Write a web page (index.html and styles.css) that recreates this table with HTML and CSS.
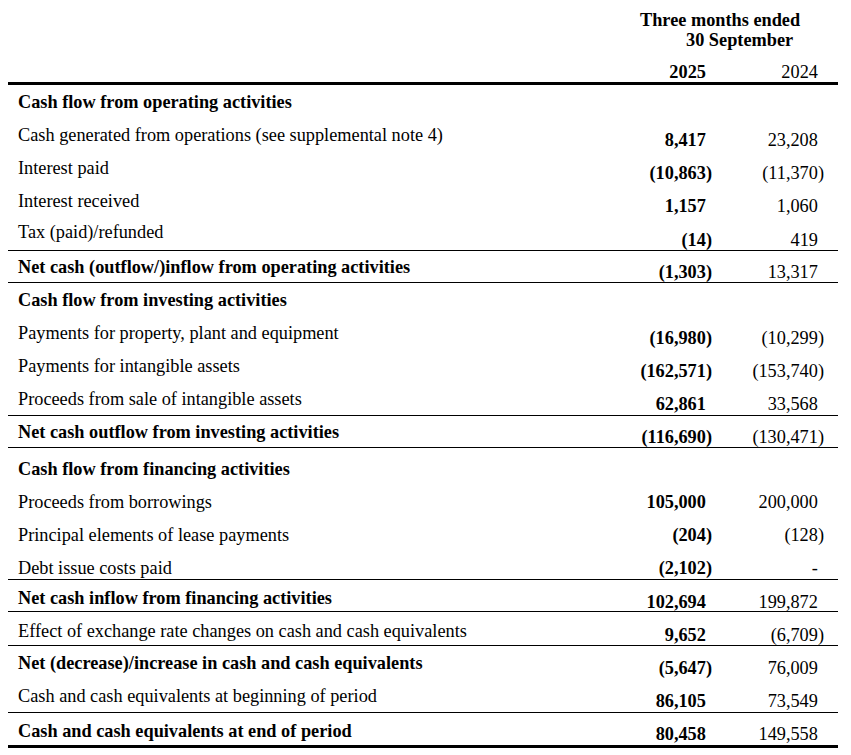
FILE: index.html
```html
<!DOCTYPE html>
<html lang="en">
<head>
<meta charset="utf-8">
<title>Cash flow statement</title>
<link rel="stylesheet" href="styles.css">
</head>
<body>
<div class="sheet">
  <div class="grid head">
    <div class="title b">
      <div class="t1">Three months ended</div>
      <div class="t2">30 September</div>
    </div>
  </div>
  <div class="grid years">
    <div></div>
    <div class="num b">2025</div>
    <div class="num">2024</div>
  </div>

  <div class="grid row"><div class="lbl b">Cash flow from operating activities</div><div></div><div></div></div>
  <div class="grid row"><div class="lbl">Cash generated from operations (see supplemental note 4)</div><div class="num b">8,417</div><div class="num">23,208</div></div>
  <div class="grid row"><div class="lbl">Interest paid</div><div class="num b">(10,863<span class="cp">)</span></div><div class="num">(11,370<span class="cp">)</span></div></div>
  <div class="grid row"><div class="lbl">Interest received</div><div class="num b">1,157</div><div class="num">1,060</div></div>
  <div class="grid row tax"><div class="lbl">Tax (paid)/refunded</div><div class="num b">(14<span class="cp">)</span></div><div class="num">419</div></div>
  <div class="grid row tot"><div class="lbl b">Net cash (outflow/)inflow from operating activities</div><div class="num b">(1,303<span class="cp">)</span></div><div class="num">13,317</div></div>

  <div class="grid row"><div class="lbl b">Cash flow from investing activities</div><div></div><div></div></div>
  <div class="grid row"><div class="lbl">Payments for property, plant and equipment</div><div class="num b">(16,980<span class="cp">)</span></div><div class="num">(10,299<span class="cp">)</span></div></div>
  <div class="grid row"><div class="lbl">Payments for intangible assets</div><div class="num b">(162,571<span class="cp">)</span></div><div class="num">(153,740<span class="cp">)</span></div></div>
  <div class="grid row"><div class="lbl">Proceeds from sale of intangible assets</div><div class="num b">62,861</div><div class="num">33,568</div></div>
  <div class="grid row tot"><div class="lbl b">Net cash outflow from investing activities</div><div class="num b">(116,690<span class="cp">)</span></div><div class="num">(130,471<span class="cp">)</span></div></div>

  <div class="grid row fin-hd"><div class="lbl b">Cash flow from financing activities</div><div></div><div></div></div>
  <div class="grid row n0"><div class="lbl">Proceeds from borrowings</div><div class="num b">105,000</div><div class="num">200,000</div></div>
  <div class="grid row n0"><div class="lbl">Principal elements of lease payments</div><div class="num b">(204<span class="cp">)</span></div><div class="num">(128<span class="cp">)</span></div></div>
  <div class="grid row n0 debt"><div class="lbl">Debt issue costs paid</div><div class="num b">(2,102<span class="cp">)</span></div><div class="num">-</div></div>
  <div class="grid row tot tot-low"><div class="lbl b">Net cash inflow from financing activities</div><div class="num b">102,694</div><div class="num">199,872</div></div>

  <div class="grid row fx"><div class="lbl">Effect of exchange rate changes on cash and cash equivalents</div><div class="num b">9,652</div><div class="num">(6,709<span class="cp">)</span></div></div>
  <div class="grid row"><div class="lbl b">Net (decrease)/increase in cash and cash equivalents</div><div class="num b">(5,647<span class="cp">)</span></div><div class="num">76,009</div></div>
  <div class="grid row"><div class="lbl">Cash and cash equivalents at beginning of period</div><div class="num b">86,105</div><div class="num">73,549</div></div>
  <div class="grid row end"><div class="lbl b">Cash and cash equivalents at end of period</div><div class="num b">80,458</div><div class="num">149,558</div></div>
</div>
</body>
</html>
```
FILE: styles.css
```css
body {
  margin: 0;
  background: #fff;
  color: #000;
  font-family: "Liberation Serif", "Times New Roman", serif;
  font-size: 18.3px;
  line-height: 20px;
}

.sheet {
  margin-left: 8px;
  width: 830px;
}

.grid {
  display: grid;
  grid-template-columns: 1fr 130px 112px;
  padding-right: 14px;
  box-sizing: border-box;
  align-items: start;
}

.b { font-weight: bold; }

.head { padding-top: 10px; }
.title { grid-column: 2 / 4; white-space: nowrap; }
.t1 { padding-left: 58px; }
.t2 { padding-left: 104px; }

.years {
  margin-top: 12px;
  height: 23px;
  border-bottom: 3px solid #000;
}

.lbl {
  padding-left: 10px;
  padding-top: 7px;
  white-space: nowrap;
}

.num {
  text-align: right;
  padding-right: 0.333em;
  padding-top: 12px;
  white-space: nowrap;
}
.years .num { padding-top: 0; }

.cp { margin-right: -0.333em; }

.row { height: 33px; }

.tot {
  border-top: 1px solid #000;
  border-bottom: 1px solid #000;
}
.tot .lbl { padding-top: 6px; }
.tot .num { padding-top: 11px; }
.tot-low .lbl { padding-top: 8px; }
.tot-low .num { padding-top: 12px; }

.tax .lbl { padding-top: 5px; }
.tax .num { padding-top: 13px; }

.fin-hd { height: 37px; }
.fin-hd .lbl { padding-top: 11px; }

.n0 .num { padding-top: 7px; }
.debt { height: 28px; }

.fx {
  height: 34px;
  border-bottom: 1px solid #000;
}
.fx .lbl { padding-top: 9px; }
.fx .num { padding-top: 13px; }

.end {
  height: 36px;
  border-top: 1px solid #000;
  border-bottom: 3px solid #000;
}
.end .lbl { padding-top: 8px; }
.end .num { padding-top: 11px; }
```
